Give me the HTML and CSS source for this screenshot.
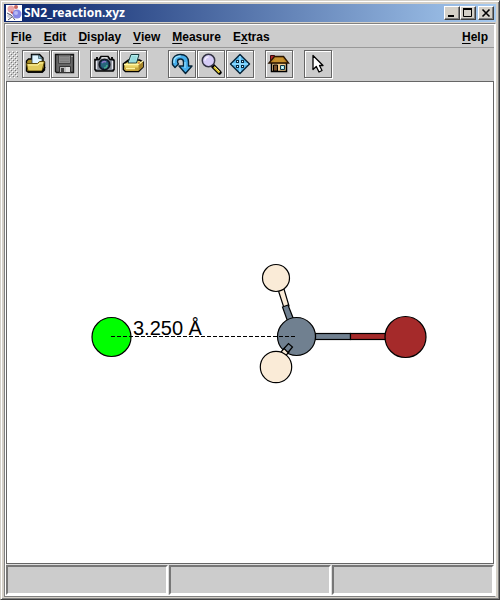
FILE: index.html
```html
<!DOCTYPE html>
<html lang="en">
<head>
<meta charset="utf-8">
<title>SN2_reaction.xyz</title>
<link rel="stylesheet" href="styles.css">
</head>
<body>
<div class="window">
  <header class="titlebar">
    <svg class="app-icon" viewBox="0 0 16 16" aria-hidden="true">
      <rect width="16" height="16" fill="#fff"/>
      <circle cx="5" cy="4" r="3.5" fill="#e9a5a8"/>
      <circle cx="10" cy="2" r="2" fill="#c9655e"/>
      <circle cx="3" cy="11" r="2" fill="#cfd0dc"/>
      <path d="M1 8l4 2 4 5M2 15l4-3" stroke="#53536b" fill="none"/>
      <path d="M5 7l3 2" stroke="#c44848" stroke-width="2"/>
      <circle cx="11" cy="9" r="4.5" fill="#8587e6"/>
      <circle cx="10" cy="8" r="2" fill="#b9baf5"/>
    </svg>
    <h1 class="title">SN2_reaction.xyz</h1>
    <div class="controls">
      <button class="control" type="button" aria-label="Minimize"><svg viewBox="0 0 12 10"><path d="M2 8h6" stroke="#000" stroke-width="2"/></svg></button>
      <button class="control" type="button" aria-label="Maximize"><svg viewBox="0 0 12 10"><path d="M1.500 1v7.500h8V1" stroke="#000" fill="none"/><path d="M1 1h9" stroke="#000" stroke-width="2"/></svg></button>
      <button class="control close" type="button" aria-label="Close"><svg viewBox="0 0 12 10"><path d="M2.500 1.500l7 7M9.500 1.500l-7 7" stroke="#000" stroke-width="1.600"/></svg></button>
    </div>
  </header>

  <div class="frame">
    <nav class="menubar">
      <button class="menu" type="button"><u>F</u>ile</button>
      <button class="menu" type="button"><u>E</u>dit</button>
      <button class="menu" type="button"><u>D</u>isplay</button>
      <button class="menu" type="button"><u>V</u>iew</button>
      <button class="menu" type="button"><u>M</u>easure</button>
      <button class="menu" type="button">E<u>x</u>tras</button>
      <button class="menu help" type="button"><u>H</u>elp</button>
    </nav>

    <div class="toolbar">
      <svg class="grip" viewBox="0 0 10 27" shape-rendering="crispEdges" aria-hidden="true">
        <defs>
          <pattern id="bumps" width="4" height="4" patternUnits="userSpaceOnUse">
            <path d="M0 0h1v1H0zM2 2h1v1H2z" fill="#fff"/>
            <path d="M1 1h1v1H1zM3 3h1v1H3z" fill="#777"/>
          </pattern>
        </defs>
        <rect width="10" height="27" fill="url(#bumps)"/>
      </svg>
      <div class="group">
        <button class="tool" type="button" aria-label="Open"><svg viewBox="1 1 26 26">
          <path d="M4.500 21V11l2-2h3v-4.500h8l3.500 3.500v3l1.500 1v8l-2 2H6z" fill="#a58b22" stroke="#000" stroke-width="1.400"/>
          <path d="M10 14V5h7l3 3v6z" fill="#dff5ff" stroke="#31444e" stroke-width=".8"/>
          <path d="M16.500 5v3.500H20z" fill="#8bc0d8" stroke="#31444e" stroke-width=".6"/>
          <path d="M4.500 13.500h11l2-2h5L20 21H6z" fill="#e0cb5c" stroke="#5d4a07"/>
          <path d="M6 15h10l2-2h3" fill="none" stroke="#fff6a2"/>
          <path d="M6 22h14l3-5" fill="none" stroke="#000" stroke-width="1.400"/>
        </svg></button>
        <button class="tool" type="button" aria-label="Save"><svg viewBox="1 1 26 26">
          <path d="M4.500 4.500h18v18h-17l-1-1z" fill="#666" stroke="#161616" stroke-width="1.400"/>
          <path d="M7.500 5h12v8.500h-12z" fill="#8c8c8c" stroke="#444"/>
          <path d="M9 6.500h9M9 9h9M9 11.500h9" stroke="#7c7c7c"/>
          <path d="M8.500 16.500h11v6h-11z" fill="#bcbcbc" stroke="#333"/>
          <path d="M10 18h3v4h-3z" fill="#444"/>
          <path d="M15 17h4v5h-4z" fill="#ddd"/>
          <path d="M21 6v1" stroke="#ddd"/>
        </svg></button>
      </div>
      <div class="group">
        <button class="tool" type="button" aria-label="Export image"><svg viewBox="1 1 26 26">
          <path d="M5 9.500h4l2-3h7l2 3h3.500l.5 1v9l-1 1.500H6l-1-1.500z" fill="#7c8491" stroke="#050505" stroke-width="1.700"/>
          <path d="M11.500 8h6" stroke="#fff" stroke-width="1.500"/>
          <path d="M6.500 11v8M22.500 11v8" stroke="#e7e7ef" stroke-width="1.500"/>
          <path d="M6 8h2M21 8h2" stroke="#111" stroke-width="2"/>
          <circle cx="14.500" cy="14.500" r="5.500" fill="#172c4d" stroke="#000"/>
          <circle cx="14.500" cy="14.500" r="3.700" fill="#27657c"/>
          <path d="M12 13a3 3 0 0 1 4-1" stroke="#8a73c9" stroke-width="1.600" fill="none"/>
          <path d="M17 15a3 3 0 0 1-3 3" stroke="#43a88b" stroke-width="1.600" fill="none"/>
        </svg></button>
        <button class="tool" type="button" aria-label="Print"><svg viewBox="1 1 26 26">
          <path d="M4.500 14l5-4h11l3.500 2v5l-4.500 4.500h-13l-2-2z" fill="#e9d262" stroke="#000" stroke-width="1.700"/>
          <path d="M9 13l3-8.500h8L17.500 13z" fill="#b3f0ef" stroke="#16383b"/>
          <path d="M12.500 7h5M11.500 9h6M11 11h6" stroke="#66b6bd" stroke-width=".7"/>
          <path d="M5 14.500h14.500L24 11" fill="none" stroke="#fff7a6" stroke-width="1.500"/>
          <path d="M5 17.500h14.500v3.500H7l-2-2z" fill="#c5a43a"/>
          <path d="M19.500 15v6l4.500-4v-5z" fill="#a58429"/>
          <path d="M7 18.500h9" stroke="#fff6a0" stroke-width="1.500"/>
          <path d="M19 13h2" stroke="#c84624"/>
        </svg></button>
      </div>
      <div class="group apart">
        <button class="tool" type="button" aria-label="Rotate"><svg viewBox="1 1 26 26">
          <path d="M7 17.500L4.500 14.500V11C4.500 7 8 4.500 12.500 4.500c5 0 8 3 8 7.500v4h3.500L17.500 23.500 11 16h4.500v-4c0-2-1.200-3-3-3s-3 1-3 2.500c0 1 .3 1.700 1 2.500z" fill="#45aeeb" stroke="#062438" stroke-width="1.400" stroke-linejoin="round"/>
          <path d="M6 13v-2c0-3 3-5 6.500-5" fill="none" stroke="#9de2ff" stroke-width="1.400"/>
          <path d="M17 12v6" stroke="#8bd6fa" fill="none" stroke-width="1.400"/>
        </svg></button>
        <button class="tool" type="button" aria-label="Zoom"><svg viewBox="1 1 26 26">
          <path d="M16 16l6.500 6.500" stroke="#000" stroke-width="4.500" stroke-linecap="round"/>
          <path d="M17 17l5.500 5.500" stroke="#d9c12c" stroke-width="2.200"/>
          <path d="M17.500 16.500l5 5" stroke="#fff38d" stroke-width=".8"/>
          <circle cx="11.500" cy="10.500" r="6.200" fill="#d5ccf6" stroke="#333344" stroke-width="1.500"/>
          <path d="M8 10.500a3.500 3.500 0 0 1 3.500-3.500" stroke="#f5f1ff" stroke-width="1.500" fill="none"/>
        </svg></button>
        <button class="tool" type="button" aria-label="Move"><svg viewBox="1 1 26 26">
          <path d="M14 4.500l9.500 9.500-9.500 9.500L4.500 14z" fill="#56b8ed" stroke="#08263b" stroke-width="1.500" stroke-linejoin="round"/>
          <path d="M14 6v16M6 14h16" stroke="#94dcff" stroke-width="1.500"/>
          <path d="M10 10h3v3h-3zM15 10h3v3h-3zM10 15h3v3h-3zM15 15h3v3h-3z" fill="#092b42"/>
          <path d="M11 11h1v1h-1zM16 11h1v1h-1zM11 16h1v1h-1zM16 16h1v1h-1z" fill="#e2f5ff"/>
        </svg></button>
      </div>
      <button class="tool" type="button" aria-label="Home"><svg viewBox="1 1 26 26">
        <path d="M5.500 5.500h4V12h-4z" fill="#b3252c" stroke="#3d080b"/>
        <path d="M6.500 12.500h15v9h-15z" fill="#f2cb8c" stroke="#000" stroke-width="1.500"/>
        <path d="M4 13l5.500-6.500h9L23.500 13z" fill="#bb8221" stroke="#2a1500" stroke-width="1.400"/>
        <path d="M10 9h8M8.500 11h11" stroke="#d3a03c"/>
        <path d="M8.500 15h4v6h-4z" fill="#78502b" stroke="#000"/>
        <path d="M15.500 15.500h4v4h-4z" fill="#a6e5ed" stroke="#123342"/>
        <path d="M17 17h1v1h-1z" fill="#fff"/>
      </svg></button>
      <button class="tool" type="button" aria-label="Select"><svg viewBox="1 1 26 26">
        <path d="M9 5.500v14l3.300-3 2.700 5.500 3-1.500-2.500-5H19z" fill="#fff" stroke="#000" stroke-width="1.300" stroke-linejoin="round"/>
      </svg></button>
    </div>

    <main class="view">
      <svg class="molecule" viewBox="7 82 486 481" role="img" aria-label="Molecule with a measured distance">
        <g stroke="#000" stroke-width="1.200">
          <path d="M278.500 291l5.500 17 5-2-5-17z" fill="#faebd7"/>
          <path d="M282.500 307l5 14 6-2-5.500-14z" fill="#708090"/>
          <circle cx="276" cy="278" r="13.500" fill="#faebd7"/>
          <rect x="315.500" y="333.500" width="35" height="6" fill="#708090"/>
          <rect x="350.500" y="333.500" width="35" height="6" fill="#a52a2a"/>
          <circle cx="405.500" cy="337" r="20.500" fill="#a52a2a"/>
          <circle cx="296.500" cy="336.500" r="19" fill="#708090"/>
          <path d="M281 352l3.500-4 4.500 4-3.500 4z" fill="#faebd7"/>
          <path d="M284 348.500l4.500-5 4 3.500-4.500 5.500z" fill="#708090"/>
          <circle cx="276" cy="367" r="15.700" fill="#faebd7"/>
          <circle cx="111.500" cy="337" r="19.500" fill="#00ff00"/>
        </g>
        <path d="M111 336.500H295" stroke="#000" stroke-dasharray="4 2"/>
        <text class="distance" x="133" y="335">3.250 Å</text>
      </svg>
    </main>

    <footer class="statusbar">
      <div class="status"></div>
      <div class="status"></div>
      <div class="status"></div>
    </footer>
  </div>
</div>
</body>
</html>
```
FILE: styles.css
```css
* {
  box-sizing: border-box;
}

body {
  margin: 0;
  font: bold 12px "Liberation Sans", sans-serif;
  color: #000;
}

button {
  padding: 0;
  font: inherit;
  color: inherit;
}

svg {
  display: block;
}

.window {
  display: flex;
  flex-direction: column;
  min-height: 100vh;
  padding: 2px;
  background: #d4d0c8;
  border: 1px solid;
  border-color: #d4d0c8 #404040 #404040 #d4d0c8;
  box-shadow: inset 1px 1px #fff, inset -1px -1px #808080;
}

.titlebar {
  display: flex;
  align-items: center;
  height: 18px;
  margin: 1px;
  padding: 0 2px;
  background: linear-gradient(90deg, #0a246a, #a6caf0);
}

.app-icon {
  width: 16px;
  height: 16px;
}

.title {
  margin: 0 auto 0 2px;
  font: bold 12px "Noto Sans", sans-serif;
  line-height: 16px;
  color: #fff;
}

.controls {
  display: flex;
}

.control {
  width: 16px;
  height: 14px;
  padding: 1px;
  background: #d4d0c8;
  border: 1px solid;
  border-color: #fff #404040 #404040 #fff;
  box-shadow: inset -1px -1px #808080;
}

.control svg {
  width: 12px;
  height: 10px;
}

.close {
  margin-left: 2px;
}

.frame {
  flex: 1;
  display: flex;
  flex-direction: column;
  margin: 0 1px;
  padding: 1px;
  background: #ccc;
  border: 1px solid;
  border-color: #808080 #fff #808080 #808080;
  box-shadow: inset 1px 1px #fff, inset -1px -1px #fff;
}

.menubar {
  display: flex;
  gap: 12px;
  height: 23px;
  padding: 2px 6px 0 5px;
  border-bottom: 1px solid #999;
}

.menu {
  background: none;
  border: 0;
}

.menu u {
  text-underline-offset: 2px;
}

.help {
  margin-left: auto;
}

.toolbar {
  display: flex;
  gap: 10px;
  padding: 2px 2px 3px;
}

.grip {
  width: 10px;
  height: 27px;
  margin: 1px -6px 0 0;
}

.group {
  display: flex;
  gap: 1px;
  margin-right: 1px;
}

.apart {
  margin-left: 10px;
}

.tool {
  width: 28px;
  height: 28px;
  background: #ccc;
  border: 1px solid #666;
  box-shadow: inset 1px 1px #fff, 1px 1px #fff;
}

.group + .tool {
  margin-right: 1px;
}

.tool svg {
  width: 26px;
  height: 26px;
}

.view {
  flex: 1;
  display: flex;
  background: #fff;
  border: 1px solid #666;
}

.molecule {
  flex: 1;
  width: 100%;
}

.distance {
  font: 20px "Liberation Sans", sans-serif;
}

.statusbar {
  display: flex;
  gap: 1px;
  height: 31px;
  padding-top: 1px;
  background: #ddd;
}

.status {
  flex: 1;
  background: #ccc;
  border: 2px solid;
  border-color: #777 #fff #fff #777;
}
```
